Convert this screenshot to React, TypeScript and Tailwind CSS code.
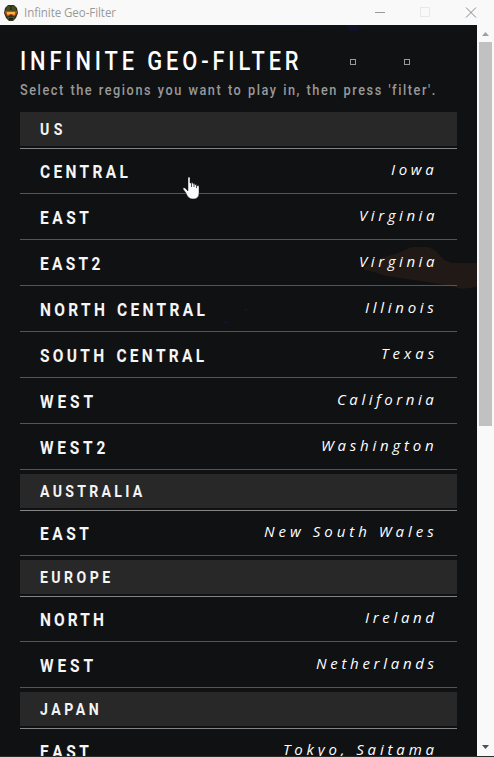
import { useLayoutEffect, useRef, useState } from "react";

type FitProps = { text: string; width: number; scale?: number; className?: string };

// Spreads the letters of a line so that it fills exactly `width` pixels.
function Fit({ text, width, scale = 1, className = "" }: FitProps) {
  const ref = useRef<HTMLSpanElement>(null);
  const [tracking, setTracking] = useState(0);
  useLayoutEffect(() => {
    if (ref.current) {
      const natural = ref.current.offsetWidth - tracking * text.length;
      setTracking((width / scale - natural) / (text.length - 1));
    }
  }, [text, width, scale]);
  return (
    <span className={`block whitespace-pre ${className}`} style={{ width }}>
      <span
        ref={ref}
        className="inline-block origin-left"
        style={{ letterSpacing: tracking, transform: `scaleX(${scale})` }}
      >
        {text}
      </span>
    </span>
  );
}

type Region = [name: string, nameWidth: number, place: string, placeWidth: number];
type Group = { title: string; width: number; regions: Region[] };

const groups: Group[] = [
  {
    title: "US",
    width: 22,
    regions: [
      ["CENTRAL", 88, "Iowa", 43],
      ["EAST", 48.5, "Virginia", 75],
      ["EAST2", 60.5, "Virginia", 75],
      ["NORTH CENTRAL", 164.5, "Illinois", 69],
      ["SOUTH CENTRAL", 164.5, "Texas", 53],
      ["WEST", 53, "California", 97],
      ["WEST2", 65, "Washington", 113],
    ],
  },
  { title: "AUSTRALIA", width: 102, regions: [["EAST", 48.5, "New South Wales", 170]] },
  {
    title: "EUROPE",
    width: 70,
    regions: [
      ["NORTH", 64, "Ireland", 69],
      ["WEST", 53, "Netherlands", 118],
    ],
  },
  { title: "JAPAN", width: 59, regions: [["EAST", 48.5, "Tokyo, Saitama", 151]] },
];

function HelmetIcon() {
  return (
    <svg className="h-4 w-[14px]" viewBox="0 0 14 16">
      <path d="M4 0h6l3 3 1 5-2 5-3 3H5l-3-3-2-5 1-5z" fill="#30331a" />
      <path d="M4 1h6l2 3v2H2V4z" fill="#494b20" />
      <path d="M6 1h2v4H6z" fill="#2b3518" />
      <path d="M1 6h12v2l-2 3H9L8 10H6l-1 1H3L1 8z" fill="#b94e19" />
      <path d="M3 7h8v2l-1 1-2-1H6l-2 1-1-1z" fill="#ffb347" />
      <path d="M3 11l2 1h4l2-1-1 3H4z" fill="#50512a" />
      <path d="M5 13h4v1H5z" fill="#191b10" />
    </svg>
  );
}

function TitleBar() {
  return (
    <header className="flex h-[25px] shrink-0 items-center bg-[#f9f9f9] pl-1">
      <HelmetIcon />
      <Fit
        text="Infinite Geo-Filter"
        width={92}
        scale={0.96}
        className="ml-[6px] font-['Open_Sans',sans-serif] text-[12px] leading-[24px] text-[#999]"
      />
      <svg className="ml-auto h-[25px] w-[130px]" viewBox="0 0 130 25" fill="none">
        <path d="M11 12.500h10" stroke="#999" />
        <rect x="56.500" y="7.500" width="9" height="9" stroke="#e8e8e8" />
        <path d="M102 7.500l10 10M112 7.500l-10 10" stroke="#888" />
      </svg>
    </header>
  );
}

function Backdrop() {
  return (
    <svg className="pointer-events-none absolute top-0 left-0 h-[731px] w-[477px]" viewBox="0 25 477 731">
      <path d="M236 25h94v1h-13v1h-12v1h-16v-1h-30v-1h-23z" fill="#10111f" />
      <path d="M347 25h14v2h-2v2h-1v2h-9v-2h-1v-1h-2v-1h1z" fill="#111228" />
      <path
        d="M364 267l8-5 12-5 14-4 14-6h16l8 4 8 9 8 3h25v24l-15 2-16-4-25-4-35-5-12-4-10-2z"
        fill="#201916"
      />
      <path d="M224 322h5v1h-5zM245 309h2v2h-2z" fill="#14152a" />
    </svg>
  );
}

function ScrollBar() {
  return (
    <aside className="flex w-[17px] flex-col items-center bg-[#f9f9f9]">
      <svg className="h-[17px] w-[17px] shrink-0" viewBox="0 0 17 17">
        <path d="M5 11l3.500-4 3.500 4z" fill="#a0a0a0" />
      </svg>
      <div className="h-[384px] w-[13px] bg-[#c1c1c1]" />
      <svg className="mt-auto h-[17px] w-[17px] shrink-0" viewBox="0 0 17 17">
        <path d="M5 6l3.500 4 3.500-4z" fill="#505050" />
      </svg>
    </aside>
  );
}

export default function App() {
  return (
    <div className="flex h-[757px] w-[494px] flex-col overflow-hidden border-b border-[#2c2c2c] bg-[#101113] font-['Roboto',sans-serif]">
      <TitleBar />
      <div className="flex min-h-0 flex-1">
        <main className="relative w-[477px] overflow-hidden px-5">
          <Backdrop />
          <div className="relative">
            <div className="flex h-[54px] items-start pt-[20px]">
              <Fit
                text="INFINITE GEO-FILTER"
                width={279}
                scale={0.84}
                className="text-[26px] leading-[32px] font-medium text-white"
              />
              <span className="mt-[14px] ml-[51px] size-[6px] border border-[#999]" />
              <span className="mt-[14px] ml-[48px] size-[6px] border border-[#999]" />
            </div>
            <Fit
              text="Select the regions you want to play in, then press 'filter'."
              width={415}
              scale={0.91}
              className="h-[29px] text-[14px] leading-[23px] font-medium text-[#999] [word-spacing:1px]"
            />
            {groups.map((group) => (
              <section key={group.title}>
                <div className="mt-1 h-[37px] border-b border-[#858585]">
                  <div className="h-[34px] bg-[#282828] pl-5">
                    <Fit
                      text={group.title}
                      width={group.width}
                      scale={0.88}
                      className="text-[16px] leading-[36px] font-bold text-[#f4f4f4]"
                    />
                  </div>
                </div>
                {group.regions.map(([name, nameWidth, place, placeWidth], i) => (
                  <div
                    key={name}
                    className={`flex justify-between border-b border-[#545557] pr-[23px] pl-5 ${i ? "h-[46px]" : "h-[45px]"}`}
                  >
                    <Fit
                      text={name}
                      width={nameWidth}
                      scale={0.86}
                      className={`text-[18px] font-bold text-[#f5f5f5] [word-spacing:2px] ${i ? "leading-[47px]" : "leading-[45px]"}`}
                    />
                    <Fit
                      text={place}
                      width={placeWidth}
                      scale={1}
                      className={`font-['Open_Sans',sans-serif] text-[15px] text-white italic ${i ? "leading-[43px]" : "leading-[41px]"}`}
                    />
                  </div>
                ))}
              </section>
            ))}
          </div>
          <svg
            className="absolute top-[151px] left-[182px] h-[24px] w-[19px]"
            viewBox="0 0 19 24"
          >
            <path
              d="M6 2q0-1 1-1t1 1v5h1q1-1 2 0v1q1-1 2 0v1q1-1 2 0v1q1-1 2 0v7q0 6-6 6-5 0-7-6l-3-4q0-2 2-1l3 3z"
              fill="#fafafa"
              stroke="#101113"
              strokeWidth=".4"
            />
            <path d="M9.500 7v4M12 8v3M14.500 9v3" stroke="#25262c" strokeWidth=".8" />
          </svg>
        </main>
        <ScrollBar />
      </div>
    </div>
  );
}
